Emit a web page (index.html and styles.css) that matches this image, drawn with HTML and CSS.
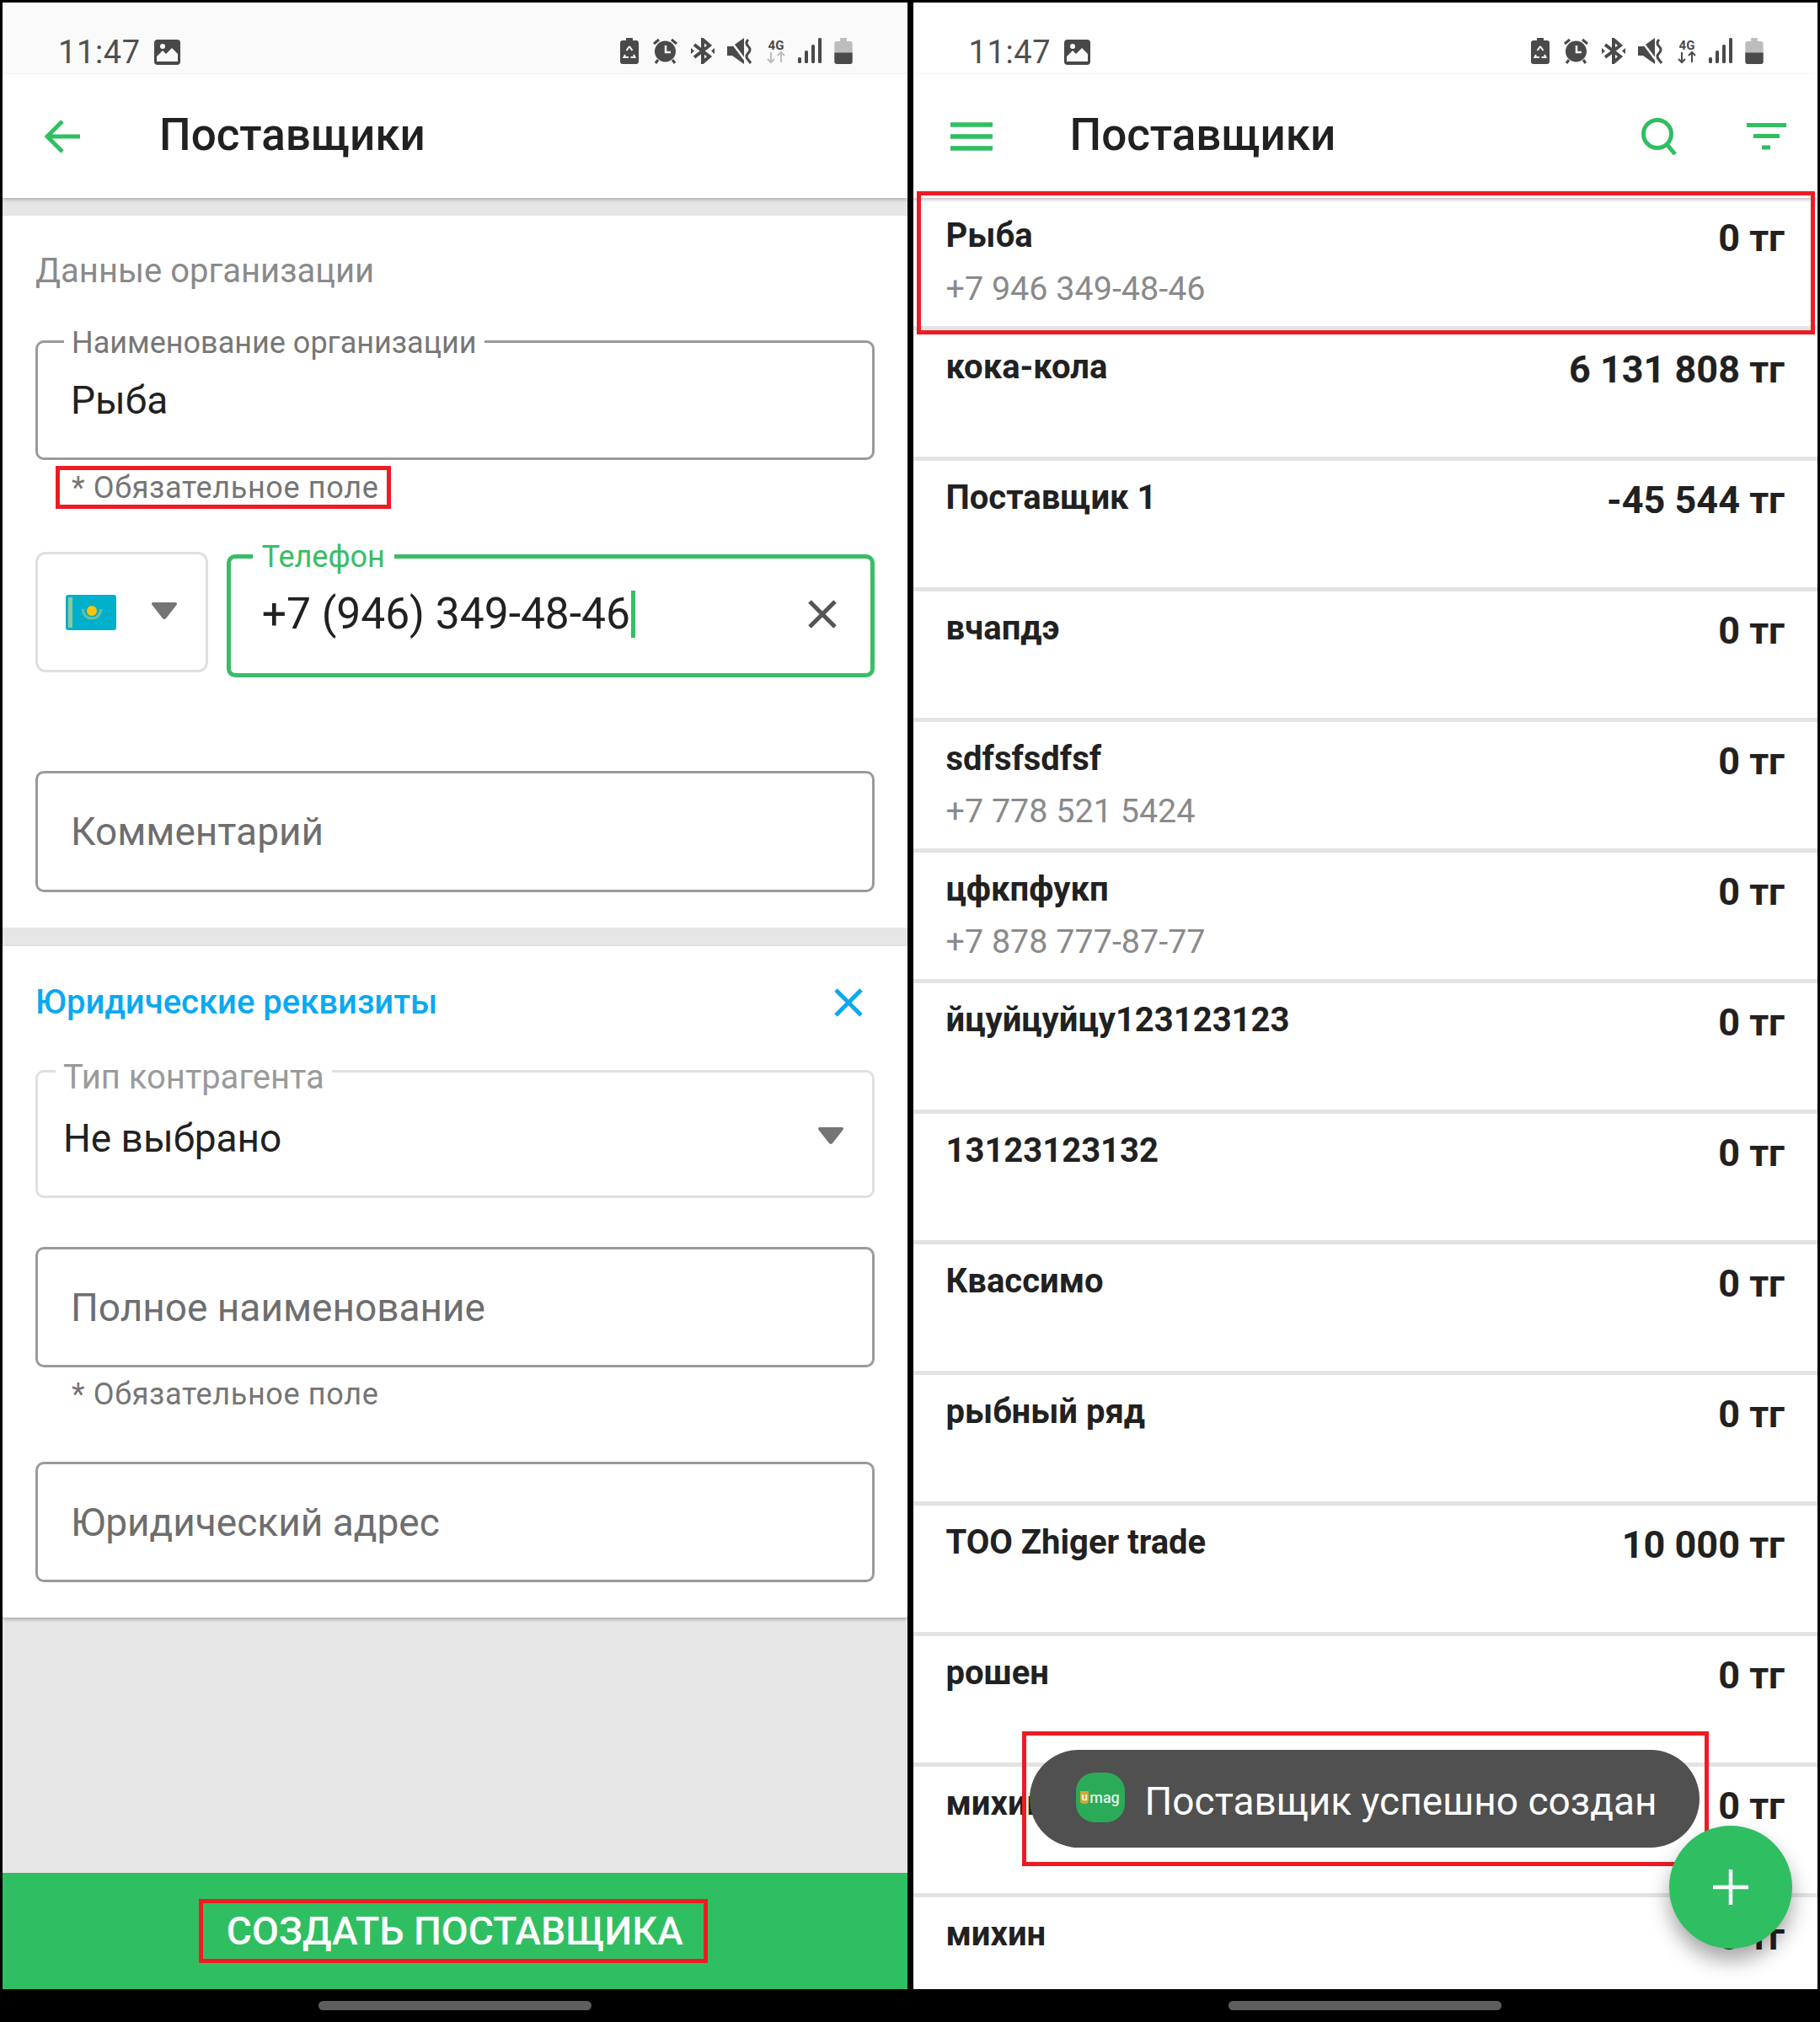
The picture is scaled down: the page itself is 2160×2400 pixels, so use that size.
FILE: index.html
```html
<!DOCTYPE html>
<html lang="ru">
<head>
<meta charset="utf-8">
<title>Поставщики</title>
<link rel="stylesheet" href="styles.css">
</head>
<body>
<svg class="defs" width="0" height="0" aria-hidden="true">
  <defs>
    <symbol id="i-image" viewBox="0 0 31 30">
      <rect width="31" height="30" rx="4" fill="#484848"/>
      <path d="M3 26V20L10 13L14 17L21 10L28 17V26Z" fill="#fafafa"/>
      <circle cx="10" cy="8" r="3" fill="#fafafa"/>
    </symbol>
    <symbol id="i-recycle" viewBox="0 0 22 31">
      <path d="M7 0H15V3H19Q22 3 22 6V28Q22 31 19 31H3Q0 31 0 28V6Q0 3 3 3H7Z" fill="#4a4a4a"/>
      <path d="M11 10L7.5 15M11 10L14.5 15M6 20L4.5 23H10M16 20L17.5 23H12.5" fill="none" stroke="#fafafa" stroke-width="2"/>
    </symbol>
    <symbol id="i-alarm" viewBox="0 0 29 31">
      <circle cx="14.500" cy="16" r="12.500" fill="#4a4a4a"/>
      <path d="M1 7L7 2M28 7L22 2M6 26L3 30M23 26L26 30" stroke="#4a4a4a" stroke-width="3" fill="none"/>
      <path d="M15 9V17H21" stroke="#fafafa" stroke-width="2.500" fill="none"/>
    </symbol>
    <symbol id="i-bt" viewBox="0 0 28 31">
      <path d="M4 8L22 22L14 29V2L22 9L4 23" fill="none" stroke="#4a4a4a" stroke-width="4"/>
      <path d="M0 12L4 15.500L0 19ZM28 12L24 15.500L28 19Z" fill="#4a4a4a"/>
    </symbol>
    <symbol id="i-mute" viewBox="0 0 30 31">
      <path d="M0 10H6L20 0V31L6 21H0Z" fill="#4a4a4a"/>
      <path d="M3 2L21 26" stroke="#fafafa" stroke-width="2.500"/>
      <path d="M25 2Q21 6 25 10Q29 14 25 18Q21 22 25 26L28 30" fill="none" stroke="#4a4a4a" stroke-width="3"/>
    </symbol>
    <symbol id="i-signal" viewBox="0 0 28 30">
      <rect x="0" y="23" width="4" height="7" rx="1.500" fill="#4a4a4a"/>
      <rect x="8" y="15" width="4" height="15" rx="1.500" fill="#4a4a4a"/>
      <rect x="16" y="8" width="4" height="22" rx="1.500" fill="#4a4a4a"/>
      <rect x="24" y="0" width="4" height="30" rx="1.500" fill="#4a4a4a"/>
    </symbol>
    <symbol id="i-battery" viewBox="0 0 22 32">
      <path d="M7 0H15V4H19Q22 4 22 7V29Q22 32 19 32H3Q0 32 0 29V7Q0 4 3 4H7Z" fill="#bdbdbd"/>
      <path d="M0 18H22V29Q22 32 19 32H3Q0 32 0 29Z" fill="#4a4a4a"/>
    </symbol>
    <symbol id="i-caret" viewBox="0 0 32 22">
      <path d="M3 1H29Q32 1 30.500 4L18 20Q16 22 14 20L1.500 4Q0 1 3 1Z" fill="#757575"/>
    </symbol>
  </defs>
</svg>

<div class="screens">
  <div class="device">
    <main class="panel">
      <div class="status status-grey">
        <span class="clock">11:47</span>
        <svg class="st-image"><use href="#i-image"/></svg>
        <span class="st-spacer"></span>
        <div class="st-icons">
          <svg class="s22"><use href="#i-recycle"/></svg>
          <svg class="s29"><use href="#i-alarm"/></svg>
          <svg class="s28"><use href="#i-bt"/></svg>
          <svg class="s30"><use href="#i-mute"/></svg>
          <svg class="s4g" viewBox="0 0 24 31"><text x="12" y="14" class="t4g">4G</text><path d="M6 17V29M2 25L6 29L10 25M18 29V17M14 21L18 17L22 21" fill="none" stroke="#bdbdbd" stroke-width="2"/></svg>
          <svg class="s28b"><use href="#i-signal"/></svg>
          <svg class="s22b"><use href="#i-battery"/></svg>
        </div>
      </div>
      <header class="appbar">
        <svg class="ic-back" viewBox="0 0 42 40"><path d="M21 2L3 20L21 38M3 20H42" fill="none" stroke="#2fbf62" stroke-width="5"/></svg>
        <h1 class="title">Поставщики</h1>
      </header>
      <div class="band"></div>
      <section class="card card-org">
        <div class="section-label">Данные организации</div>
        <div class="field field-org">
          <span class="float">Наименование организации</span>
          <span class="value">Рыба</span>
        </div>
        <div class="hint hint-marked">* Обязательное поле</div>
        <div class="phone-row">
          <div class="country">
            <svg class="flag" viewBox="0 0 60 42">
              <rect width="60" height="42" rx="3" fill="#00afca"/>
              <rect x="3" y="3" width="5" height="36" fill="#8fc79a"/>
              <circle cx="31" cy="19" r="6" fill="#fec50c"/>
              <path d="M20 17Q22 28 31 28Q40 28 42 17" fill="none" stroke="#6cc0a0" stroke-width="3"/>
            </svg>
            <svg class="caret"><use href="#i-caret"/></svg>
          </div>
          <div class="field field-phone">
            <span class="float float-green">Телефон</span>
            <span class="value value-phone">+7 (946) 349-48-46<span class="cursor"></span></span>
            <svg class="ic-x" viewBox="0 0 34 34"><path d="M2 2L32 32M32 2L2 32" fill="none" stroke="#555" stroke-width="5"/></svg>
          </div>
        </div>
        <div class="field field-comment"><span class="ph">Комментарий</span></div>
      </section>
      <div class="band band-b"></div>
      <section class="card card-legal">
        <div class="legal-head">
          <h2 class="legal-title">Юридические реквизиты</h2>
          <svg class="ic-x-blue" viewBox="0 0 34 34"><path d="M2 2L32 32M32 2L2 32" fill="none" stroke="#0aa9f0" stroke-width="5"/></svg>
        </div>
        <div class="field field-select">
          <span class="float float-select">Тип контрагента</span>
          <span class="value value-select">Не выбрано</span>
          <svg class="caret caret-select"><use href="#i-caret"/></svg>
        </div>
        <div class="field field-plain field-full"><span class="ph">Полное наименование</span></div>
        <div class="hint hint-plain">* Обязательное поле</div>
        <div class="field field-plain field-addr"><span class="ph">Юридический адрес</span></div>
      </section>
      <div class="filler"></div>
      <footer class="cta"><span class="cta-text">СОЗДАТЬ ПОСТАВЩИКА</span></footer>
    </main>
    <div class="navzone"><span class="homebar"></span></div>
  </div>

  <div class="device">
    <main class="panel panel-list">
      <div class="status">
        <span class="clock">11:47</span>
        <svg class="st-image"><use href="#i-image"/></svg>
        <span class="st-spacer"></span>
        <div class="st-icons">
          <svg class="s22"><use href="#i-recycle"/></svg>
          <svg class="s29"><use href="#i-alarm"/></svg>
          <svg class="s28"><use href="#i-bt"/></svg>
          <svg class="s30"><use href="#i-mute"/></svg>
          <svg class="s4g" viewBox="0 0 24 31"><text x="12" y="14" class="t4g">4G</text><path d="M6 17V29M2 25L6 29L10 25M18 29V17M14 21L18 17L22 21" fill="none" stroke="#4a4a4a" stroke-width="2"/></svg>
          <svg class="s28b"><use href="#i-signal"/></svg>
          <svg class="s22b"><use href="#i-battery"/></svg>
        </div>
      </div>
      <header class="appbar appbar-list">
        <svg class="ic-menu" viewBox="0 0 50 34"><path d="M0 3H50M0 17H50M0 31H50" fill="none" stroke="#2fbf62" stroke-width="5.500"/></svg>
        <h1 class="title title-list">Поставщики</h1>
        <svg class="ic-search" viewBox="0 0 42 44"><circle cx="19" cy="19" r="16.500" fill="none" stroke="#2fbf62" stroke-width="5"/><path d="M30 31L40 43" fill="none" stroke="#2fbf62" stroke-width="5"/></svg>
        <svg class="ic-filter" viewBox="0 0 47 32"><path d="M0 2.500H47M8 15.500H39M18 29H28" fill="none" stroke="#2fbf62" stroke-width="5"/></svg>
      </header>
      <ul class="list">
        <li class="row row-first"><div class="row-main"><div class="name">Рыба</div><div class="phone">+7 946 349-48-46</div></div><div class="sum">0 тг</div></li>
        <li class="row"><div class="row-main"><div class="name">кока-кола</div></div><div class="sum">6 131 808 тг</div></li>
        <li class="row"><div class="row-main"><div class="name">Поставщик 1</div></div><div class="sum">-45 544 тг</div></li>
        <li class="row"><div class="row-main"><div class="name">вчапдэ</div></div><div class="sum">0 тг</div></li>
        <li class="row"><div class="row-main"><div class="name">sdfsfsdfsf</div><div class="phone">+7 778 521 5424</div></div><div class="sum">0 тг</div></li>
        <li class="row"><div class="row-main"><div class="name">цфкпфукп</div><div class="phone">+7 878 777-87-77</div></div><div class="sum">0 тг</div></li>
        <li class="row"><div class="row-main"><div class="name">йцуйцуйцу123123123</div></div><div class="sum">0 тг</div></li>
        <li class="row"><div class="row-main"><div class="name">13123123132</div></div><div class="sum">0 тг</div></li>
        <li class="row"><div class="row-main"><div class="name">Квассимо</div></div><div class="sum">0 тг</div></li>
        <li class="row"><div class="row-main"><div class="name">рыбный ряд</div></div><div class="sum">0 тг</div></li>
        <li class="row"><div class="row-main"><div class="name">ТОО Zhiger trade</div></div><div class="sum">10 000 тг</div></li>
        <li class="row"><div class="row-main"><div class="name">рошен</div></div><div class="sum">0 тг</div></li>
        <li class="row"><div class="row-main"><div class="name">михин</div></div><div class="sum">0 тг</div></li>
        <li class="row"><div class="row-main"><div class="name">михин</div></div><div class="sum">0 тг</div></li>
      </ul>
      <div class="mark mark-row"></div>
      <div class="toast">
        <span class="toast-logo"><span class="logo-u">u</span>mag</span>
        <span class="toast-text">Поставщик успешно создан</span>
      </div>
      <div class="mark mark-toast"></div>
      <button class="fab" type="button" aria-label="Добавить"><svg class="ic-plus" viewBox="0 0 42 42"><path d="M21 0V42M0 21H42" fill="none" stroke="#fff" stroke-width="4.500"/></svg></button>
    </main>
    <div class="navzone"><span class="homebar"></span></div>
  </div>
</div>
</body>
</html>
```
FILE: styles.css
```css
* { box-sizing: border-box; }
html, body { margin: 0; padding: 0; background: #000; }
body { font-family: Roboto, "Noto Sans", sans-serif; color: #212121; }
.defs { position: absolute; }
.screens { display: flex; gap: 7px; padding: 3px 3px 0; height: 2400px; }
.device { width: 1073.500px; display: flex; flex-direction: column; }
.panel { height: 2358px; background: #fff; display: flex; flex-direction: column; overflow: hidden; position: relative; }

.status { height: 85px; flex: none; display: flex; align-items: flex-start; padding: 41px 0 0 66px; background: #fff; }
.status-grey { background: #fafafa; }
.clock { font-size: 38px; line-height: 36px; color: #505050; letter-spacing: .6px; }
.st-image { width: 31px; height: 30px; margin: 3px 0 0 16px; }
.st-spacer { flex: 1; }
.st-icons { display: flex; padding-right: 64.500px; margin-top: 1px; }
.s22, .s22b { width: 22px; height: 31px; }
.s29 { width: 29px; height: 31px; margin-left: 17px; }
.s28 { width: 28px; height: 31px; margin-left: 16px; }
.s30 { width: 30px; height: 31px; margin-left: 15px; }
.s4g { width: 24px; height: 31px; margin-left: 16px; }
.s28b { width: 28px; height: 30px; margin-left: 14px; }
.s22b { margin-left: 15px; }
.t4g { font-size: 15px; font-weight: 700; fill: #4a4a4a; text-anchor: middle; font-family: Roboto, sans-serif; }

.appbar { height: 147px; flex: none; display: flex; align-items: center; padding-left: 50px; background: #fff; box-shadow: 0 2px 4px rgba(0,0,0,.25); position: relative; z-index: 1; }
.ic-back { width: 42px; height: 40px; }
.title { margin: -3px 0 0 94px; font-size: 53px; font-weight: 500; line-height: 60px; color: #212121; }
.appbar-list { padding: 0 37px 0 44px; }
.ic-menu { width: 50px; height: 34px; }
.title-list { margin-left: 92px; flex: 1; }
.ic-search { width: 42px; height: 44px; }
.ic-filter { width: 47px; height: 32px; margin-left: 83px; }

.band { height: 21px; flex: none; background: #e6e6e6; }
.band-b { height: 22px; }
.card { flex: none; background: #fff; padding: 0 39px; }
.card-org { height: 845px; padding-top: 44px; box-shadow: 0 1px 2px rgba(0,0,0,.18); }
.section-label { font-size: 40px; line-height: 44px; color: #8a8a8a; }

.field { position: relative; border: 3px solid #9a9a9a; border-radius: 10px; display: flex; align-items: center; background: #fff; }
.float { position: absolute; left: 31px; top: -19px; padding: 0 9px; background: #fff; font-size: 36px; line-height: 38px; color: #777; white-space: nowrap; }
.value { font-size: 46px; line-height: 56px; color: #212121; }
.ph { font-size: 46px; line-height: 56px; color: #6e6e6e; padding-left: 39px; }
.field-org { height: 142px; margin-top: 60px; padding-left: 39px; }

.hint { font-size: 36px; line-height: 42px; color: #757575; letter-spacing: .65px; }
.hint-marked { width: 398px; height: 51px; margin: 7px 0 0 24px; padding: 0 0 0 14px; border: 5px solid #ed1c24; white-space: nowrap; }
.hint-plain { padding: 11px 0 0 43px; height: 112px; }

.phone-row { display: flex; align-items: flex-start; gap: 22px; margin-top: 51px; }
.country { width: 205px; height: 143px; border: 3px solid #e0e0e0; border-radius: 12px; display: flex; align-items: center; gap: 41px; padding: 0 0 0 33px; }
.flag { width: 60px; height: 42px; }
.caret { width: 32px; height: 22px; margin-top: -4px; }
.field-phone { width: 770px; height: 146px; margin-top: 3px; border: 5px solid #38bd66; border-radius: 10px; padding: 0 0 4px 37px; }
.float-green { color: #38bd66; left: 26px; top: -21px; padding: 0 11px; }
.value-phone { display: flex; align-items: center; flex: 1; font-size: 51.500px; }
.cursor { width: 5px; height: 56px; background: #38bd66; margin-left: 1px; }
.ic-x { width: 34px; height: 34px; margin-right: 40px; }
.field-comment { height: 144px; margin-top: 111px; }

.card-legal { height: 797px; padding-top: 46px; box-shadow: 0 2px 4px rgba(0,0,0,.3); position: relative; border-radius: 0 0 4px 4px; }
.legal-head { display: flex; align-items: center; justify-content: space-between; height: 42px; padding-right: 14px; }
.legal-title { margin: 0; font-size: 40px; font-weight: 500; color: #0aa9f0; line-height: 42px; }
.ic-x-blue { width: 34px; height: 34px; }
.field-select { height: 152px; margin-top: 59px; border-color: #e0e0e0; padding: 10px 0 0 30px; }
.float-select { left: 21px; color: #9a9a9a; font-size: 40px; top: -13px; padding: 0 9px; }
.value-select { flex: 1; }
.caret-select { margin: -6px 33px 0 0; }
.field-plain { height: 143px; }
.field-full { margin-top: 58px; }

.filler { flex: 1; background: #e6e6e6; }
.cta { height: 138px; flex: none; background: #2fbf62; display: flex; align-items: center; justify-content: center; padding-right: 3px; }
.cta-text { width: 604px; height: 76px; border: 5px solid #ed1c24; color: #fff; font-size: 46.300px; font-weight: 500; display: flex; align-items: center; justify-content: center; white-space: nowrap; padding-left: 3px; }

.navzone { flex: 1; display: flex; justify-content: center; padding-top: 14px; }
.homebar { width: 324px; height: 11px; border-radius: 6px; background: #5e5e5e; }

.list { list-style: none; margin: 0; padding: 0; flex: 1; overflow: hidden; }
.row { height: 155px; border-bottom: 5px solid #e3e3e3; display: flex; justify-content: space-between; align-items: flex-start; padding: 22px 39px 0; }
.row-first { height: 157px; padding-top: 23px; }
.name { font-size: 40px; font-weight: 700; line-height: 44px; color: #212121; }
.phone { font-size: 39.500px; line-height: 44px; color: #8a8a8a; margin-top: 18px; }
.row-first .phone { margin-top: 19px; }
.sum { font-size: 45px; font-weight: 700; line-height: 48px; color: #212121; margin-top: 1px; }

.mark { position: absolute; border: 5px solid #ed1c24; pointer-events: none; z-index: 2; }
.mark-row { left: 4px; top: 224px; width: 1066px; height: 170px; }
.mark-toast { left: 129px; top: 2052px; width: 815px; height: 160px; }
.toast { position: absolute; z-index: 2; left: 138px; top: 2074px; width: 795px; height: 116px; border-radius: 58px; background: #505050; display: flex; align-items: center; padding-left: 55px; }
.toast-logo { width: 58px; height: 59px; border-radius: 22px; background: #2bab57; color: #dff3e5; font-size: 18px; font-weight: 500; display: flex; align-items: center; justify-content: center; flex: none; margin-top: -4px; }
.logo-u { background: #d6a62c; color: #fff; width: 10px; height: 15px; line-height: 13px; text-align: center; border-radius: 0 0 4px 4px; margin-right: 1px; font-size: 13px; }
.toast-text { margin: 6px 0 0 24px; color: #fff; font-size: 46px; line-height: 56px; white-space: nowrap; }
.fab { position: absolute; z-index: 3; left: 897px; top: 2164px; width: 146px; height: 146px; border: 0; padding: 0; border-radius: 50%; background: #2fbf62; box-shadow: 0 14px 24px rgba(0,0,0,.35); display: flex; align-items: center; justify-content: center; }
.ic-plus { width: 42px; height: 42px; }
```
